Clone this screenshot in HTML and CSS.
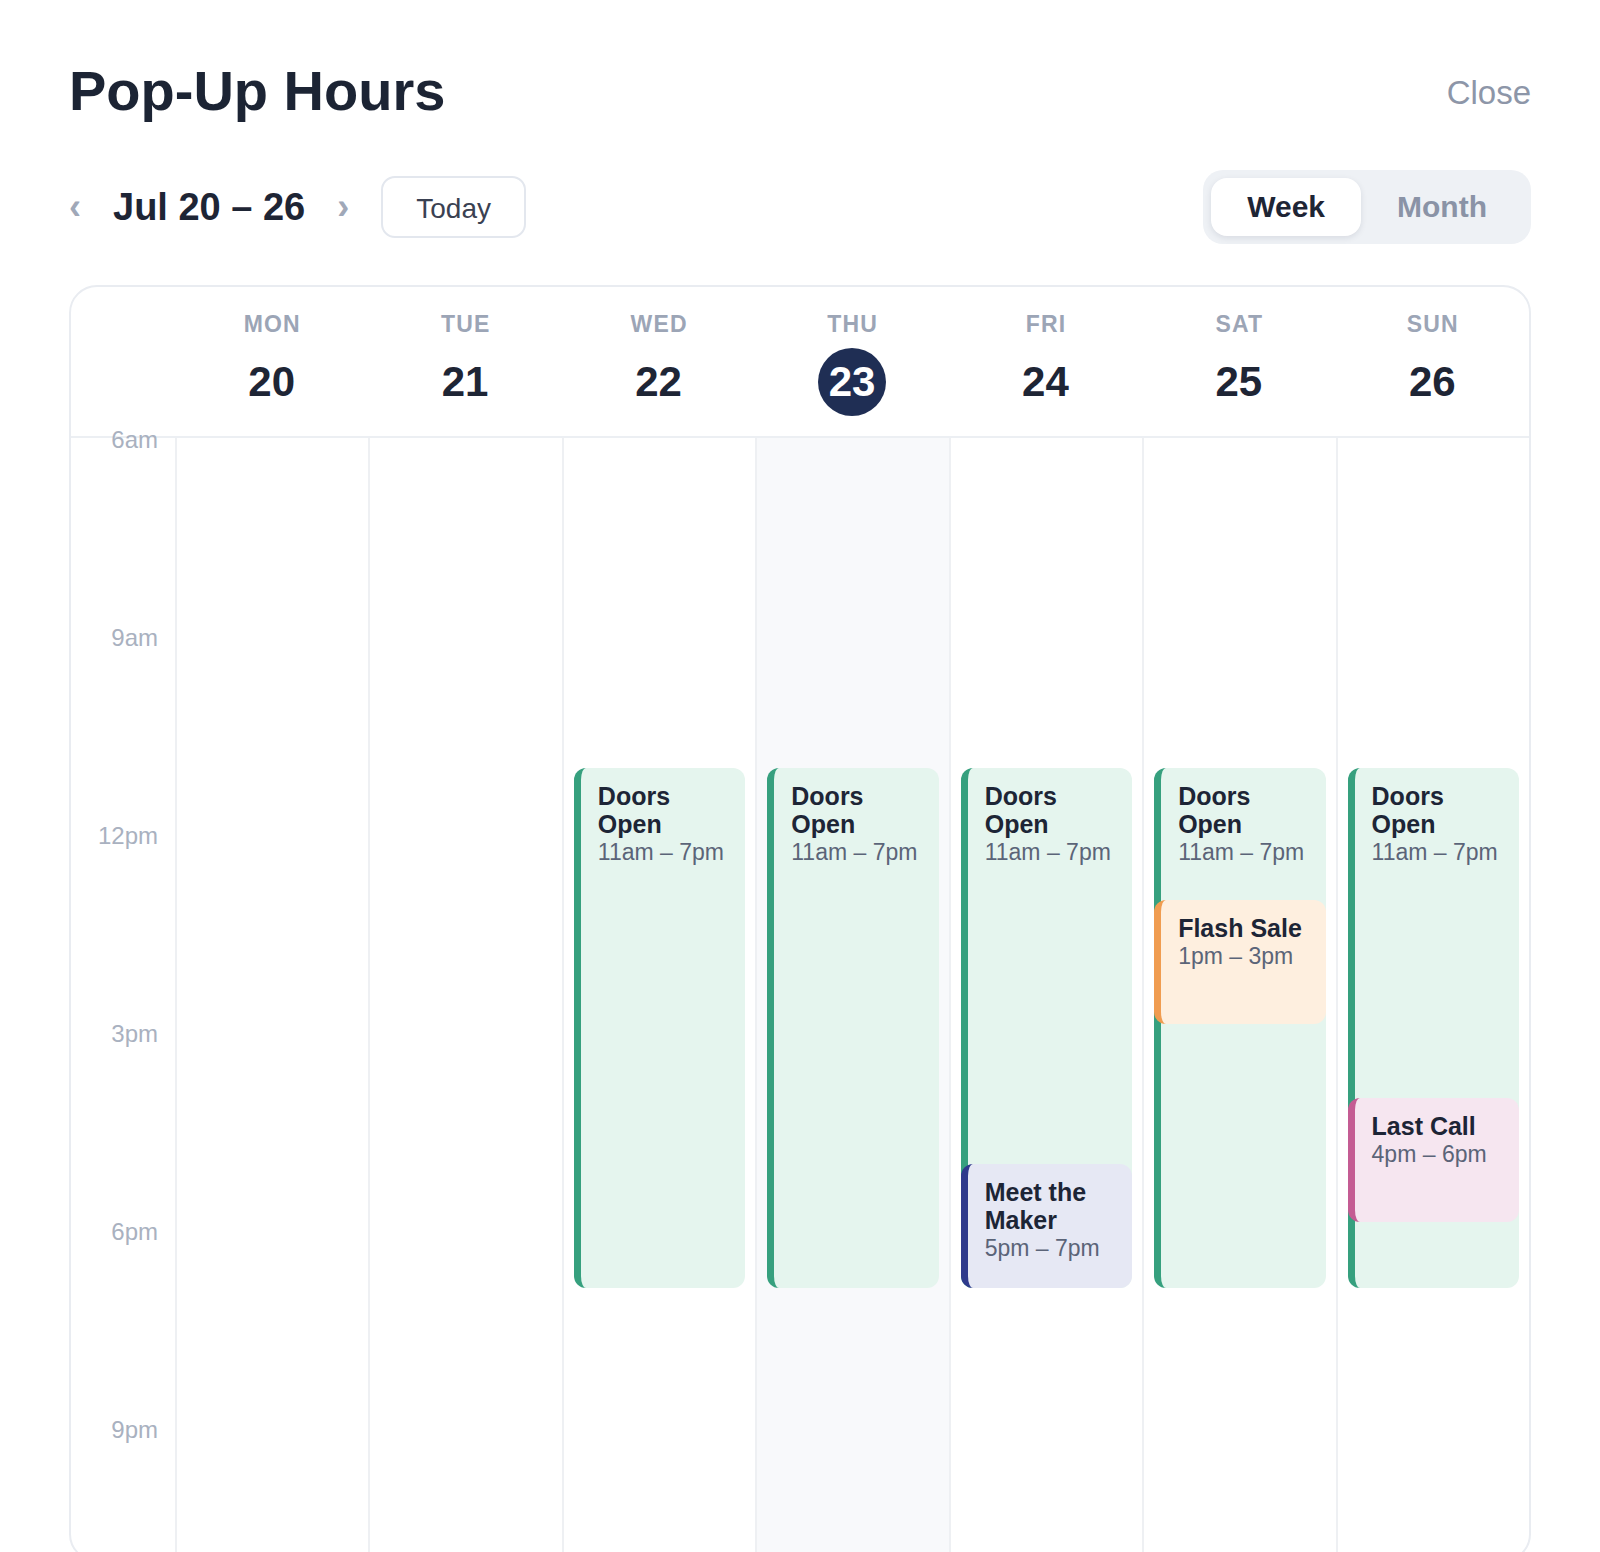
FILE: index.html
```html
<!DOCTYPE html>
<html lang="en">
<head>
<meta charset="utf-8">
<title>Pop-Up Hours</title>
<link rel="stylesheet" href="styles.css">
</head>
<body>
<div class="page">
  <header class="top">
    <h1 class="title">Pop-Up Hours</h1>
    <button class="close">Close</button>
  </header>

  <div class="toolbar">
    <div class="nav">
      <button class="chev" aria-label="Previous week">&#8249;</button>
      <h2 class="range">Jul 20 – 26</h2>
      <button class="chev" aria-label="Next week">&#8250;</button>
      <button class="today-btn">Today</button>
    </div>
    <div class="seg">
      <button class="seg-btn active">Week</button>
      <button class="seg-btn">Month</button>
    </div>
  </div>

  <div class="cal">
    <div class="cal-head">
      <div class="gutter"></div>
      <div class="dh"><span class="dow">MON</span><span class="dnum">20</span></div>
      <div class="dh"><span class="dow">TUE</span><span class="dnum">21</span></div>
      <div class="dh"><span class="dow">WED</span><span class="dnum">22</span></div>
      <div class="dh"><span class="dow">THU</span><span class="dnum is-today">23</span></div>
      <div class="dh"><span class="dow">FRI</span><span class="dnum">24</span></div>
      <div class="dh"><span class="dow">SAT</span><span class="dnum">25</span></div>
      <div class="dh"><span class="dow">SUN</span><span class="dnum">26</span></div>
    </div>

    <div class="cal-body">
      <div class="times">
        <span class="hour" style="top:0px">6am</span>
        <span class="hour" style="top:198px">9am</span>
        <span class="hour" style="top:396px">12pm</span>
        <span class="hour" style="top:594px">3pm</span>
        <span class="hour" style="top:792px">6pm</span>
        <span class="hour" style="top:990px">9pm</span>
      </div>

      <div class="col"></div>
      <div class="col"></div>
      <div class="col">
        <div class="ev ev-green" style="top:330px;height:520px">
          <div class="ev-title">Doors Open</div>
          <div class="ev-time">11am – 7pm</div>
        </div>
      </div>
      <div class="col col-today">
        <div class="ev ev-green" style="top:330px;height:520px">
          <div class="ev-title">Doors Open</div>
          <div class="ev-time">11am – 7pm</div>
        </div>
      </div>
      <div class="col">
        <div class="ev ev-green" style="top:330px;height:520px">
          <div class="ev-title">Doors Open</div>
          <div class="ev-time">11am – 7pm</div>
        </div>
        <div class="ev ev-indigo" style="top:726px;height:124px">
          <div class="ev-title">Meet the Maker</div>
          <div class="ev-time">5pm – 7pm</div>
        </div>
      </div>
      <div class="col">
        <div class="ev ev-green" style="top:330px;height:520px">
          <div class="ev-title">Doors Open</div>
          <div class="ev-time">11am – 7pm</div>
        </div>
        <div class="ev ev-orange" style="top:462px;height:124px">
          <div class="ev-title">Flash Sale</div>
          <div class="ev-time">1pm – 3pm</div>
        </div>
      </div>
      <div class="col">
        <div class="ev ev-green" style="top:330px;height:520px">
          <div class="ev-title">Doors Open</div>
          <div class="ev-time">11am – 7pm</div>
        </div>
        <div class="ev ev-pink" style="top:660px;height:124px">
          <div class="ev-title">Last Call</div>
          <div class="ev-time">4pm – 6pm</div>
        </div>
      </div>
    </div>
  </div>
</div>
</body>
</html>
```

FILE: styles.css
```css
html, body {
  margin: 0;
  padding: 0;
  background: #ffffff;
  overflow: hidden;
}

body {
  font-family: "Liberation Sans", Arial, Helvetica, sans-serif;
  color: #1e2535;
}

button {
  font-family: inherit;
  cursor: pointer;
}

.page {
  padding: 57px 69px 56px;
}

/* ---------- top row ---------- */
.top {
  display: flex;
  justify-content: space-between;
  align-items: center;
}

.title {
  margin: 0;
  font-size: 56px;
  line-height: 67px;
  font-weight: 700;
  color: #1c2434;
}

.close {
  background: none;
  border: none;
  padding: 0;
  margin-top: 4px;
  font-size: 33px;
  line-height: 40px;
  color: #8d96a8;
}

/* ---------- toolbar ---------- */
.toolbar {
  margin-top: 46px;
  display: flex;
  justify-content: space-between;
  align-items: center;
}

.nav {
  display: flex;
  align-items: center;
  gap: 32px;
}

.chev {
  background: none;
  border: none;
  padding: 0;
  font-size: 36px;
  font-weight: 700;
  line-height: 1;
  color: #a0a8b8;
}

.range {
  margin: 0;
  font-size: 38px;
  line-height: 44px;
  font-weight: 700;
  color: #1e2535;
}

.today-btn {
  height: 62px;
  padding: 3px 33px 0;
  background: #ffffff;
  border: 2px solid #e3e7ee;
  border-radius: 14px;
  font-size: 28px;
  color: #3a4152;
}

.seg {
  display: flex;
  padding: 8px;
  background: #eef1f5;
  border-radius: 20px;
}

.seg-btn {
  height: 58px;
  padding: 0 36px;
  background: transparent;
  border: none;
  border-radius: 16px;
  font-size: 30px;
  font-weight: 700;
  color: #8a93a6;
}

.seg-btn.active {
  background: #ffffff;
  color: #1e2535;
  box-shadow: 0 2px 6px rgba(20, 30, 55, 0.10);
}

/* ---------- calendar card ---------- */
.cal {
  margin-top: 41px;
  border: 2px solid #e9ecf1;
  border-radius: 28px;
  overflow: hidden;
  background: #ffffff;
}

.cal-head,
.cal-body {
  display: grid;
  grid-template-columns: 104px repeat(7, 1fr);
}

.cal-head {
  border-bottom: 2px solid #eceff3;
  padding: 24px 0 20px;
}

.dh {
  display: flex;
  flex-direction: column;
  align-items: center;
}

.dow {
  font-size: 23px;
  line-height: 26px;
  font-weight: 700;
  letter-spacing: 0.05em;
  margin-right: -0.05em;
  color: #9ca5b6;
}

.dnum {
  margin-top: 11px;
  width: 68px;
  height: 68px;
  border-radius: 50%;
  display: flex;
  align-items: center;
  justify-content: center;
  font-size: 42px;
  font-weight: 700;
  color: #1e2535;
}

.dnum.is-today {
  background: #1f2e54;
  color: #ffffff;
}

.cal-body {
  height: 1122px;
}

.times {
  position: relative;
}

.hour {
  position: absolute;
  right: 17px;
  margin-top: 2px;
  transform: translateY(-50%);
  font-size: 24px;
  line-height: 1;
  color: #a9b1c0;
  white-space: nowrap;
}

.col {
  position: relative;
  border-left: 2px solid #eef0f3;
}

.col-today {
  background: #f8f9fb;
}

/* ---------- events ---------- */
.ev {
  position: absolute;
  left: 10px;
  right: 10px;
  box-sizing: border-box;
  border-left: 7px solid;
  border-radius: 12px;
  padding: 14px 14px 0 17px;
  overflow: hidden;
}

.ev-title {
  font-size: 25px;
  line-height: 28px;
  font-weight: 700;
  color: #1d2536;
}

.ev-time {
  font-size: 23px;
  line-height: 28px;
  color: #5b6478;
}

.ev-green {
  background: #e5f5ee;
  border-left-color: #36a07e;
}

.ev-orange {
  background: #feefdf;
  border-left-color: #f09c50;
}

.ev-indigo {
  background: #e6e8f4;
  border-left-color: #2f3a8c;
}

.ev-pink {
  background: #f6e6f0;
  border-left-color: #c45c93;
}
```
